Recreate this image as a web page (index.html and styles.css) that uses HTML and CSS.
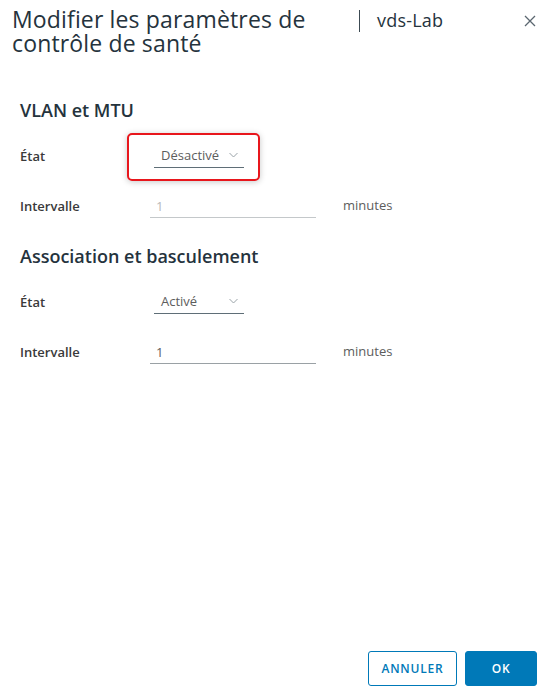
FILE: index.html
```html
<!DOCTYPE html>
<html lang="fr">
<head>
<meta charset="utf-8">
<link rel="stylesheet" href="styles.css">
</head>
<body>
<div class="modal">
  <header class="head">
    <h1 class="title">Modifier les paramètres de contrôle de santé</h1>
    <div class="sep"></div>
    <div class="obj">vds-Lab</div>
    <button class="close" aria-label="Fermer">
      <svg width="12" height="12" viewBox="0 0 12 12"><path d="M1 1L11 11M11 1L1 11" stroke="#5b6770" stroke-width="1.3" fill="none"/></svg>
    </button>
  </header>

  <section class="sec">
    <h2 class="sec-title">VLAN et MTU</h2>
    <div class="row">
      <label class="lbl">État</label>
      <div class="ctrl">
        <div class="select hl">
          <span class="val">Désactivé</span>
          <svg class="chev" width="9" height="6" viewBox="0 0 9 6"><path d="M0.5 1L4.5 5L8.5 1" stroke="#9aa3a8" stroke-width="1" fill="none"/></svg>
        </div>
      </div>
    </div>
    <div class="row">
      <label class="lbl">Intervalle</label>
      <div class="ctrl">
        <div class="input disabled">1</div>
        <span class="unit">minutes</span>
      </div>
    </div>
  </section>

  <section class="sec sec2">
    <h2 class="sec-title">Association et basculement</h2>
    <div class="row">
      <label class="lbl">État</label>
      <div class="ctrl">
        <div class="select">
          <span class="val">Activé</span>
          <svg class="chev" width="9" height="6" viewBox="0 0 9 6"><path d="M0.5 1L4.5 5L8.5 1" stroke="#9aa3a8" stroke-width="1" fill="none"/></svg>
        </div>
      </div>
    </div>
    <div class="row">
      <label class="lbl">Intervalle</label>
      <div class="ctrl">
        <div class="input">1</div>
        <span class="unit">minutes</span>
      </div>
    </div>
  </section>

  <footer class="foot">
    <button class="btn btn-outline">ANNULER</button>
    <button class="btn btn-primary">OK</button>
  </footer>
</div>
</body>
</html>
```

FILE: styles.css
```css
*, *::before, *::after { box-sizing: border-box; }
html, body { margin: 0; padding: 0; background: #fff; }
body {
  font-family: "Open Sans", "Liberation Sans", sans-serif;
  color: #313131;
  width: 552px;
  height: 699px;
  overflow: hidden;
}
.modal {
  display: flex;
  flex-direction: column;
  height: 699px;
}
.head {
  display: flex;
  align-items: flex-start;
  padding: 7px 15px 0 12px;
}
.title {
  margin: 0;
  width: 330px;
  font-size: 23px;
  line-height: 24px;
  font-weight: 400;
  color: #25333d;
  letter-spacing: 0.15px;
}
.sep {
  width: 1px;
  height: 22px;
  background: #3c4a52;
  margin: 3px 0 0 17px;
}
.obj {
  margin: 2px 0 0 17px;
  font-size: 18px;
  line-height: 22px;
  color: #25333d;
  letter-spacing: 0.2px;
  flex: 1;
}
.close {
  border: 0;
  background: none;
  padding: 0;
  margin: 7px 0 0 0;
  width: 14px;
  height: 14px;
  display: flex;
  align-items: center;
  justify-content: center;
}
.sec { padding: 0 20px; margin-top: 44px; }
.sec2 { margin-top: 1px; }
.sec-title {
  margin: 0 0 23px;
  font-size: 18px;
  line-height: 22px;
  font-weight: 600;
  color: #25333d;
  letter-spacing: 0;
}
.row {
  display: flex;
  align-items: center;
  height: 24px;
  margin-bottom: 26px;
}
.lbl {
  width: 130px;
  font-size: 13px;
  font-weight: 600;
  color: #3a3a3a;
}
.ctrl {
  display: flex;
  align-items: center;
}
.select {
  position: relative;
  margin-left: 4px;
  width: 90px;
  height: 24px;
  border-bottom: 1px solid #5f6e77;
  display: flex;
  align-items: center;
  padding: 0 0 2px 7px;
  font-size: 13px;
  color: #5d5d5d;
}
.select .val { flex: 1; }
.select .chev { margin-right: 6px; }
.select.hl::before {
  content: "";
  position: absolute;
  left: -27px;
  top: -11px;
  width: 133px;
  height: 48px;
  border: 2px solid #e8161c;
  border-radius: 5px;
  box-shadow: 0 1px 6px rgba(0,0,0,0.22);
  pointer-events: none;
}
.input {
  width: 166px;
  height: 24px;
  border-bottom: 1px solid #9aa1a5;
  padding: 2px 0 0 6px;
  font-size: 13px;
  color: #5d5d5d;
  line-height: 20px;
}
.input.disabled { color: #b9b9b9; border-bottom-color: #c4c8ca; }
.unit {
  margin-left: 27px;
  margin-top: -3px;
  font-size: 13px;
  color: #5d5d5d;
}
.foot {
  margin-top: auto;
  display: flex;
  justify-content: flex-end;
  gap: 8px;
  padding: 0 15px 13px 0;
}
.btn {
  height: 35px;
  border-radius: 3px;
  font-family: inherit;
  font-size: 12px;
  font-weight: 600;
  letter-spacing: 0.8px;
  padding: 0;
}
.btn-outline {
  width: 89px;
  background: #fff;
  color: #0079b8;
  border: 1px solid #0079b8;
}
.btn-primary {
  width: 72px;
  background: #0079b8;
  color: #fff;
  border: 1px solid #0079b8;
}
```
